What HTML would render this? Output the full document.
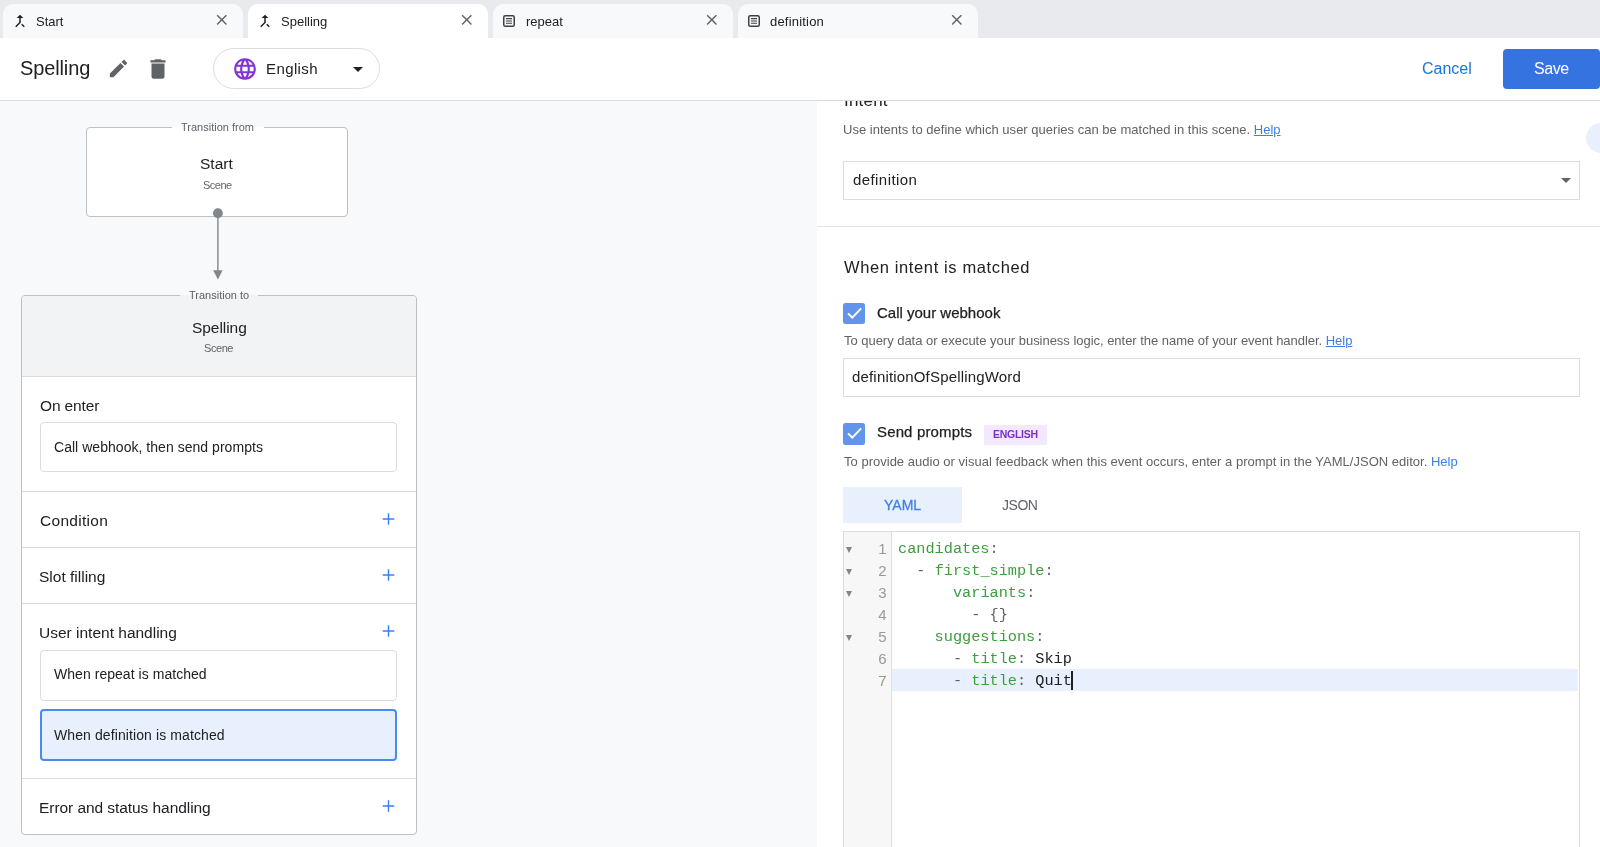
<!DOCTYPE html>
<html><head><meta charset="utf-8"><title>Spelling</title>
<style>
html,body{margin:0;padding:0}
body{width:1600px;height:847px;overflow:hidden;position:relative;background:#fff;font-family:'Liberation Sans',sans-serif}
.r{position:absolute}
.t{position:absolute;white-space:nowrap;will-change:transform}
</style></head><body>
<div class="r" style="left:817px;top:101px;width:783px;height:746px;background:#fff"></div>
<div class="t" style="left:843.60px;top:92.42px;font-size:17px;line-height:17px;color:#202124;letter-spacing:0.200px;">Intent</div>
<div class="r" style="left:1586px;top:123px;width:30px;height:30px;background:#e8f0fe;border-radius:15px"></div>
<div class="t" style="left:842.50px;top:123.30px;font-size:13px;line-height:13px;color:#5f6368;letter-spacing:0.014px;">Use intents to define which user queries can be matched in this scene. <span style="color:#3b7ded;text-decoration:underline">Help</span></div>
<div class="r" style="left:843px;top:161px;width:737px;height:39px;box-sizing:border-box;border:1px solid #dadce0;background:#fff"></div>
<div class="t" style="left:852.70px;top:172.11px;font-size:15px;line-height:15px;color:#202124;letter-spacing:0.422px;">definition</div>
<div class="r" style="left:1561px;top:178px;width:0;height:0;border-left:5.0px solid transparent;border-right:5.0px solid transparent;border-top:5px solid #5f6368"></div>
<div class="r" style="left:817px;top:226px;width:783px;height:1px;background:#e3e5e8"></div>
<div class="t" style="left:844.40px;top:258.54px;font-size:16.5px;line-height:16.5px;color:#202124;letter-spacing:0.619px;">When intent is matched</div>
<div class="r" style="left:843px;top:302.5px;width:22px;height:21.8px;background:#6394eb;border-radius:2.5px"><svg width="22" height="22" viewBox="0 0 22 22"><path d="M5 10.4L9.2 14.6L18.2 5.4" fill="none" stroke="#fff" stroke-width="1.9"/></svg></div>
<div class="t" style="left:876.70px;top:305.11px;font-size:15px;line-height:15px;color:#202124;-webkit-text-stroke:0.25px #202124;">Call your webhook</div>
<div class="t" style="left:844.10px;top:333.80px;font-size:13px;line-height:13px;color:#5f6368;letter-spacing:-0.029px;">To query data or execute your business logic, enter the name of your event handler. <span style="color:#3b7ded;text-decoration:underline">Help</span></div>
<div class="r" style="left:843px;top:358px;width:737px;height:39px;box-sizing:border-box;border:1px solid #dadce0;background:#fff"></div>
<div class="t" style="left:852.00px;top:369.01px;font-size:15px;line-height:15px;color:#202124;letter-spacing:0.173px;">definitionOfSpellingWord</div>
<div class="r" style="left:843px;top:423px;width:22px;height:21.5px;background:#6394eb;border-radius:2.5px"><svg width="22" height="22" viewBox="0 0 22 22"><path d="M5 10.4L9.2 14.6L18.2 5.4" fill="none" stroke="#fff" stroke-width="1.9"/></svg></div>
<div class="t" style="left:876.70px;top:424.31px;font-size:15px;line-height:15px;color:#202124;letter-spacing:0.145px;-webkit-text-stroke:0.25px #202124;">Send prompts</div>
<div class="r" style="left:984px;top:424.5px;width:63px;height:20px;background:#f3e8fd"></div>
<div class="t" style="left:993.00px;top:429.02px;font-size:10.5px;line-height:10.5px;color:#7b2fc4;font-weight:700;letter-spacing:-0.283px;">ENGLISH</div>
<div class="t" style="left:844.10px;top:455.40px;font-size:13px;line-height:13px;color:#5f6368;letter-spacing:0.014px;">To provide audio or visual feedback when this event occurs, enter a prompt in the YAML/JSON editor. <span style="color:#3b7ded">Help</span></div>
<div class="r" style="left:843px;top:487px;width:119px;height:36px;background:#e8f0fe"></div>
<div class="t" style="left:884.00px;top:498.36px;font-size:14px;line-height:14px;color:#3f80ea;-webkit-text-stroke:0.3px #3f80ea;">YAML</div>
<div class="t" style="left:1002.00px;top:498.36px;font-size:14px;line-height:14px;color:#5f6368;letter-spacing:-0.467px;">JSON</div>
<div class="r" style="left:843px;top:531px;width:737px;height:330px;box-sizing:border-box;border:1px solid #dadce0;background:#fff"></div>
<div class="r" style="left:844px;top:532px;width:47px;height:320px;background:#f7f7f7;border-right:1px solid #e0e0e0"></div>
<div class="r" style="left:892px;top:669px;width:686px;height:22px;background:#e8f0fe"></div>
<div class="t" style="left:897.50px;top:542.31px;font-size:15.25px;line-height:15.25px;color:#202124;font-family:'Liberation Mono', monospace;white-space:pre;"><span style="color:#3d9e3d">candidates</span><span style="color:#5f6368">:</span></div>
<div class="t" style="left:875.50px;top:541.31px;font-size:15px;line-height:15px;color:#999;width:10.5px;text-align:right;">1</div>
<div class="r" style="left:846.3px;top:547px;width:0;height:0;border-left:3.0px solid transparent;border-right:3.0px solid transparent;border-top:6px solid #80868b"></div>
<div class="t" style="left:897.50px;top:564.31px;font-size:15.25px;line-height:15.25px;color:#202124;font-family:'Liberation Mono', monospace;white-space:pre;">  <span style="color:#5f6368">-</span> <span style="color:#3d9e3d">first_simple</span><span style="color:#5f6368">:</span></div>
<div class="t" style="left:875.50px;top:563.31px;font-size:15px;line-height:15px;color:#999;width:10.5px;text-align:right;">2</div>
<div class="r" style="left:846.3px;top:569px;width:0;height:0;border-left:3.0px solid transparent;border-right:3.0px solid transparent;border-top:6px solid #80868b"></div>
<div class="t" style="left:897.50px;top:586.31px;font-size:15.25px;line-height:15.25px;color:#202124;font-family:'Liberation Mono', monospace;white-space:pre;">      <span style="color:#3d9e3d">variants</span><span style="color:#5f6368">:</span></div>
<div class="t" style="left:875.50px;top:585.31px;font-size:15px;line-height:15px;color:#999;width:10.5px;text-align:right;">3</div>
<div class="r" style="left:846.3px;top:591px;width:0;height:0;border-left:3.0px solid transparent;border-right:3.0px solid transparent;border-top:6px solid #80868b"></div>
<div class="t" style="left:897.50px;top:608.31px;font-size:15.25px;line-height:15.25px;color:#202124;font-family:'Liberation Mono', monospace;white-space:pre;">        <span style="color:#5f6368">- {}</span></div>
<div class="t" style="left:875.50px;top:607.31px;font-size:15px;line-height:15px;color:#999;width:10.5px;text-align:right;">4</div>
<div class="t" style="left:897.50px;top:630.31px;font-size:15.25px;line-height:15.25px;color:#202124;font-family:'Liberation Mono', monospace;white-space:pre;">    <span style="color:#3d9e3d">suggestions</span><span style="color:#5f6368">:</span></div>
<div class="t" style="left:875.50px;top:629.31px;font-size:15px;line-height:15px;color:#999;width:10.5px;text-align:right;">5</div>
<div class="r" style="left:846.3px;top:635px;width:0;height:0;border-left:3.0px solid transparent;border-right:3.0px solid transparent;border-top:6px solid #80868b"></div>
<div class="t" style="left:897.50px;top:652.31px;font-size:15.25px;line-height:15.25px;color:#202124;font-family:'Liberation Mono', monospace;white-space:pre;">      <span style="color:#5f6368">-</span> <span style="color:#3d9e3d">title</span><span style="color:#5f6368">:</span> <span style="color:#202124">Skip</span></div>
<div class="t" style="left:875.50px;top:651.31px;font-size:15px;line-height:15px;color:#999;width:10.5px;text-align:right;">6</div>
<div class="t" style="left:897.50px;top:674.31px;font-size:15.25px;line-height:15.25px;color:#202124;font-family:'Liberation Mono', monospace;white-space:pre;">      <span style="color:#5f6368">-</span> <span style="color:#3d9e3d">title</span><span style="color:#5f6368">:</span> <span style="color:#202124">Quit</span></div>
<div class="t" style="left:875.50px;top:673.31px;font-size:15px;line-height:15px;color:#999;width:10.5px;text-align:right;">7</div>
<div class="r" style="left:1071px;top:671px;width:1.5px;height:19px;background:#202124"></div>
<div class="r" style="left:0px;top:101px;width:817px;height:746px;background:#f8f9fa"></div>
<div class="r" style="left:86px;top:127px;width:262px;height:90px;box-sizing:border-box;border:1px solid #bdc1c6;border-radius:4px;background:#fff"></div>
<div class="r" style="left:172px;top:122px;width:92px;height:8px;background:linear-gradient(#f8f9fa 5px,#fff 5px)"></div>
<div class="t" style="left:181.00px;top:121.99px;font-size:11px;line-height:11px;color:#5f6368;">Transition from</div>
<div class="t" style="left:200.10px;top:156.49px;font-size:15.5px;line-height:15.5px;color:#202124;">Start</div>
<div class="t" style="left:203.00px;top:179.69px;font-size:11px;line-height:11px;color:#5f6368;letter-spacing:-0.525px;">Scene</div>
<svg class="r" style="left:200px;top:200px" width="40" height="90" viewBox="200 200 40 90"><circle cx="217.9" cy="213.2" r="4.9" fill="#80868b"/><path d="M217.9 213V272" stroke="#80868b" stroke-width="1.4"/><path d="M213.2 270.2H222.6L217.9 279.4Z" fill="#80868b"/></svg>
<div class="r" style="left:21px;top:295px;width:396px;height:540px;box-sizing:border-box;border:1px solid #bdc1c6;border-radius:4px;background:#fff;overflow:hidden"></div>
<div class="r" style="left:22px;top:296px;width:394px;height:80px;background:#f1f3f4;border-radius:3px 3px 0 0"></div>
<div class="r" style="left:22px;top:376px;width:394px;height:1px;background:#dadce0"></div>
<div class="r" style="left:180px;top:290px;width:78px;height:8px;background:linear-gradient(#f8f9fa 5px,#f1f3f4 5px)"></div>
<div class="t" style="left:189.00px;top:289.69px;font-size:11px;line-height:11px;color:#5f6368;">Transition to</div>
<div class="t" style="left:192.00px;top:320.49px;font-size:15.5px;line-height:15.5px;color:#202124;letter-spacing:-0.057px;">Spelling</div>
<div class="t" style="left:204.00px;top:343.29px;font-size:11px;line-height:11px;color:#5f6368;letter-spacing:-0.425px;">Scene</div>
<div class="t" style="left:39.50px;top:398.29px;font-size:15.5px;line-height:15.5px;color:#202124;letter-spacing:-0.143px;">On enter</div>
<div class="r" style="left:40px;top:422px;width:357px;height:50px;box-sizing:border-box;border:1px solid #dadce0;border-radius:4px;background:#fff"></div>
<div class="t" style="left:54.00px;top:440.36px;font-size:14px;line-height:14px;color:#202124;letter-spacing:0.037px;">Call webhook, then send prompts</div>
<div class="r" style="left:22px;top:491px;width:394px;height:1px;background:#dadce0"></div>
<div class="r" style="left:22px;top:547px;width:394px;height:1px;background:#dadce0"></div>
<div class="r" style="left:22px;top:603px;width:394px;height:1px;background:#dadce0"></div>
<div class="r" style="left:22px;top:778px;width:394px;height:1px;background:#dadce0"></div>
<div class="t" style="left:39.50px;top:512.89px;font-size:15.5px;line-height:15.5px;color:#202124;letter-spacing:0.300px;">Condition</div>
<div class="t" style="left:38.90px;top:569.29px;font-size:15.5px;line-height:15.5px;color:#202124;">Slot filling</div>
<div class="t" style="left:38.50px;top:625.29px;font-size:15.5px;line-height:15.5px;color:#202124;">User intent handling</div>
<div class="r" style="left:40px;top:650px;width:357px;height:51px;box-sizing:border-box;border:1px solid #dadce0;border-radius:4px;background:#fff"></div>
<div class="t" style="left:54.00px;top:667.16px;font-size:14px;line-height:14px;color:#202124;letter-spacing:0.043px;">When repeat is matched</div>
<div class="r" style="left:40px;top:709px;width:357px;height:52px;box-sizing:border-box;border:2px solid #4a8af0;border-radius:4px;background:#e8f0fe"></div>
<div class="t" style="left:54.00px;top:727.66px;font-size:14px;line-height:14px;color:#202124;letter-spacing:0.100px;">When definition is matched</div>
<div class="t" style="left:38.50px;top:799.99px;font-size:15.5px;line-height:15.5px;color:#202124;letter-spacing:-0.062px;">Error and status handling</div>
<svg class="r" style="left:380px;top:511px" width="16" height="16" viewBox="380 511 16 16"><path d="M382.7 519H394.3M388.5 513.2V524.8" stroke="#3b7ded" stroke-width="1.4"/></svg>
<svg class="r" style="left:380px;top:567px" width="16" height="16" viewBox="380 567 16 16"><path d="M382.7 575H394.3M388.5 569.2V580.8" stroke="#3b7ded" stroke-width="1.4"/></svg>
<svg class="r" style="left:380px;top:623px" width="16" height="16" viewBox="380 623 16 16"><path d="M382.7 631H394.3M388.5 625.2V636.8" stroke="#3b7ded" stroke-width="1.4"/></svg>
<svg class="r" style="left:380px;top:798px" width="16" height="16" viewBox="380 798 16 16"><path d="M382.7 806H394.3M388.5 800.2V811.8" stroke="#3b7ded" stroke-width="1.4"/></svg>
<div class="r" style="left:0px;top:0px;width:1600px;height:38px;background:#e8eaed"></div>
<div class="r" style="left:3px;top:4px;width:240px;height:34px;background:#f8f9fa;border-radius:10px 10px 0 0"></div>
<svg class="r" style="left:11px;top:12px" width="18" height="18" viewBox="0 0 24 24"><path fill="#202124" d="M17 20.41L18.41 19 15 15.59 13.59 17 17 20.41zM7.5 8H11v5.59L5.59 19 7 20.41l6-6V8h3.5L12 3.5 7.5 8z"/></svg>
<div class="t" style="left:35.50px;top:14.60px;font-size:13px;line-height:13px;color:#202124;">Start</div>
<svg class="r" style="left:213px;top:11px" width="17.6" height="17.6" viewBox="0 0 24 24"><path fill="#5f6368" d="M19 6.41L17.59 5 12 10.59 6.41 5 5 6.41 10.59 12 5 17.59 6.41 19 12 13.41 17.59 19 19 17.59 13.41 12z"/></svg>
<div class="r" style="left:248px;top:4px;width:240px;height:34px;background:#fff;border-radius:10px 10px 0 0"></div>
<svg class="r" style="left:256px;top:12px" width="18" height="18" viewBox="0 0 24 24"><path fill="#202124" d="M17 20.41L18.41 19 15 15.59 13.59 17 17 20.41zM7.5 8H11v5.59L5.59 19 7 20.41l6-6V8h3.5L12 3.5 7.5 8z"/></svg>
<div class="t" style="left:280.50px;top:14.60px;font-size:13px;line-height:13px;color:#202124;">Spelling</div>
<svg class="r" style="left:458px;top:11px" width="17.6" height="17.6" viewBox="0 0 24 24"><path fill="#5f6368" d="M19 6.41L17.59 5 12 10.59 6.41 5 5 6.41 10.59 12 5 17.59 6.41 19 12 13.41 17.59 19 19 17.59 13.41 12z"/></svg>
<div class="r" style="left:493px;top:4px;width:240px;height:34px;background:#f8f9fa;border-radius:10px 10px 0 0"></div>
<svg class="r" style="left:503px;top:15px" width="12" height="12" viewBox="0 0 12 12"><rect x="0.75" y="0.75" width="10.5" height="10.5" rx="1.6" fill="none" stroke="#3c4043" stroke-width="1.5"/><path d="M3 3.6h6M3 6h6M3 8.3h6" stroke="#3c4043" stroke-width="1.1"/></svg>
<div class="t" style="left:526.00px;top:14.60px;font-size:13px;line-height:13px;color:#202124;">repeat</div>
<svg class="r" style="left:703px;top:11px" width="17.6" height="17.6" viewBox="0 0 24 24"><path fill="#5f6368" d="M19 6.41L17.59 5 12 10.59 6.41 5 5 6.41 10.59 12 5 17.59 6.41 19 12 13.41 17.59 19 19 17.59 13.41 12z"/></svg>
<div class="r" style="left:738px;top:4px;width:240px;height:34px;background:#f8f9fa;border-radius:10px 10px 0 0"></div>
<svg class="r" style="left:748px;top:15px" width="12" height="12" viewBox="0 0 12 12"><rect x="0.75" y="0.75" width="10.5" height="10.5" rx="1.6" fill="none" stroke="#3c4043" stroke-width="1.5"/><path d="M3 3.6h6M3 6h6M3 8.3h6" stroke="#3c4043" stroke-width="1.1"/></svg>
<div class="t" style="left:770.20px;top:14.60px;font-size:13px;line-height:13px;color:#202124;letter-spacing:0.200px;">definition</div>
<svg class="r" style="left:948px;top:11px" width="17.6" height="17.6" viewBox="0 0 24 24"><path fill="#5f6368" d="M19 6.41L17.59 5 12 10.59 6.41 5 5 6.41 10.59 12 5 17.59 6.41 19 12 13.41 17.59 19 19 17.59 13.41 12z"/></svg>
<div class="r" style="left:0px;top:38px;width:1600px;height:62px;background:#fff"></div>
<div class="r" style="left:0px;top:100px;width:1600px;height:1px;background:#dadce0"></div>
<div class="t" style="left:20.00px;top:58.48px;font-size:20px;line-height:20px;color:#202124;letter-spacing:-0.129px;">Spelling</div>
<svg class="r" style="left:107px;top:57px" width="23" height="23" viewBox="0 0 24 24"><path fill="#5f6368" d="M3 17.25V21h3.75L17.81 9.94l-3.75-3.75L3 17.25zM20.71 7.04c.39-.39.39-1.02 0-1.41l-2.34-2.34c-.39-.39-1.02-.39-1.41 0l-1.830 1.83 3.75 3.75 1.83-1.83z"/></svg>
<svg class="r" style="left:144.6px;top:55.8px" width="26" height="26" viewBox="0 0 24 24"><path fill="#5f6368" d="M6 19c0 1.1.9 2 2 2h8c1.1 0 2-.9 2-2V7H6v12zM19 4h-3.5l-1-1h-5l-1 1H5v2h14V4z"/></svg>
<div class="r" style="left:213px;top:48px;width:165px;height:39px;border:1px solid #dadce0;border-radius:21px;background:#fff"></div>
<svg class="r" style="left:231.7px;top:55.6px" width="26" height="26" viewBox="0 0 24 24"><path fill="#8334d6" d="M11.99 2C6.47 2 2 6.48 2 12s4.47 10 9.99 10C17.52 22 22 17.52 22 12S17.52 2 11.99 2zm6.93 6h-2.95c-.32-1.25-.78-2.45-1.38-3.56 1.84.63 3.37 1.91 4.33 3.56zM12 4.04c.83 1.2 1.48 2.53 1.91 3.96h-3.82c.43-1.43 1.08-2.76 1.91-3.96zM4.26 14C4.1 13.36 4 12.69 4 12s.1-1.36.26-2h3.38c-.08.66-.14 1.32-.14 2 0 .68.06 1.34.14 2H4.26zm.82 2h2.95c.32 1.25.78 2.45 1.38 3.56-1.84-.63-3.37-1.9-4.33-3.56zm2.95-8H5.08c.96-1.66 2.49-2.93 4.33-3.56C8.81 5.55 8.35 6.75 8.03 8zM12 19.96c-.83-1.2-1.48-2.53-1.91-3.96h3.82c-.43 1.43-1.08 2.76-1.91 3.96zM14.34 14H9.66c-.09-.66-.16-1.32-.16-2 0-.68.07-1.35.16-2h4.68c.09.65.16 1.32.16 2 0 .68-.07 1.34-.16 2zm.25 5.56c.6-1.11 1.06-2.31 1.38-3.56h2.95c-.96 1.65-2.49 2.93-4.33 3.56zM16.36 14c.08-.66.14-1.32.14-2 0-.68-.06-1.34-.14-2h3.38c.16.64.26 1.31.26 2s-.1 1.36-.26 2h-3.38z"/></svg>
<div class="t" style="left:266.00px;top:61.11px;font-size:15px;line-height:15px;color:#202124;letter-spacing:0.400px;">English</div>
<div class="r" style="left:352.5px;top:66.5px;width:0;height:0;border-left:5.0px solid transparent;border-right:5.0px solid transparent;border-top:5px solid #202124"></div>
<div class="t" style="left:1421.50px;top:60.86px;font-size:16px;line-height:16px;color:#1a73e8;">Cancel</div>
<div class="r" style="left:1503px;top:49px;width:97px;height:40px;background:#3574e0;border-radius:4px"></div>
<div class="t" style="left:1534.00px;top:60.86px;font-size:16px;line-height:16px;color:#fff;letter-spacing:-0.400px;">Save</div>
</body></html>
